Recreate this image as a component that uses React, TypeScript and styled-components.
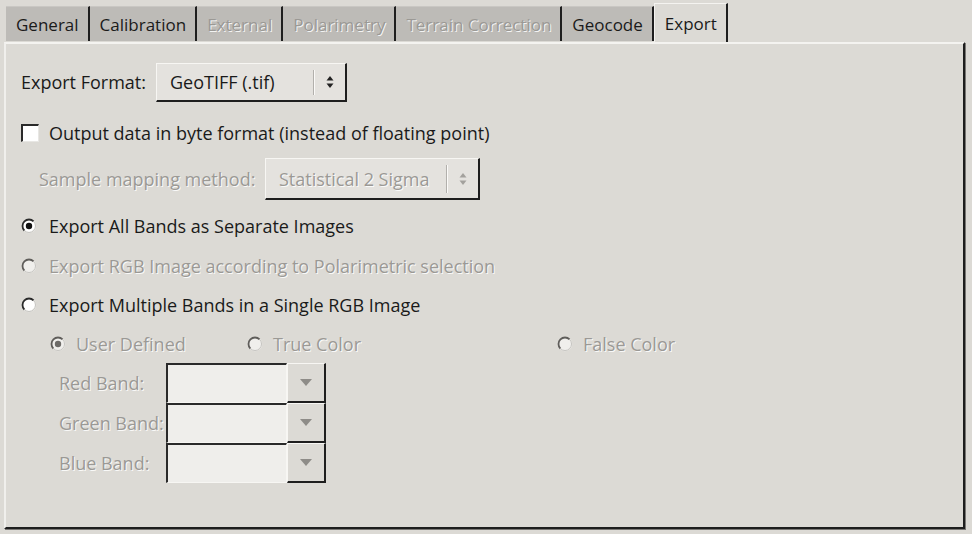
import React from "react";
import styled, { createGlobalStyle, css } from "styled-components";

const Global = createGlobalStyle`
  html, body { margin: 0; padding: 0; background: #dcdad5; }
  body { font-family: "Open Sans", "Noto Sans", "DejaVu Sans", sans-serif; }
  * { box-sizing: border-box; }
`;

const Window = styled.div`
  width: 972px;
  height: 534px;
  background: #dcdad5;
  display: flex;
  flex-direction: column;
  font-size: 18px;
  color: #1a1a1a;
  overflow: hidden;
`;

const TabBar = styled.div`
  display: flex;
  align-items: flex-end;
  height: 42px;
  padding-left: 6px;
  padding-top: 3px;
  font-size: 17px;
`;

const Tab = styled.div<{ $active?: boolean; $disabled?: boolean }>`
  height: ${(p) => (p.$active ? "39px" : "35px")};
  display: flex;
  align-items: center;
  padding: 0 9px 0 10px;
  background: ${(p) => (p.$active ? "#dcdad5" : "#bdbbb7")};
  border-right: 2px solid #1e1e1e;
  border-top: 1px solid ${(p) => (p.$active ? "#f4f3f0" : "#c9c7c3")};
  border-left: ${(p) => (p.$active ? "1px solid #f4f3f0" : "0")};
  color: ${(p) => (p.$disabled ? "#9b9995" : "#1a1a1a")};
  text-shadow: ${(p) => (p.$disabled ? "1px 1px 0 rgba(255,255,255,0.85)" : "none")};
  white-space: nowrap;
  ${(p) => !p.$active && css`margin-bottom: 1px;`}
`;

const Panel = styled.div`
  flex: 1;
  margin: 0 7px 5px 4px;
  border-top: 2px solid #f4f3f0;
  border-left: 2px solid #f0efec;
  border-right: 2px solid #1e1e1e;
  border-bottom: 2px solid #1e1e1e;
  box-shadow: 1px 1px 0 #7a7875;
  display: flex;
  flex-direction: column;
  padding: 18px 0 0 15px;
`;

const Row = styled.div<{ $h: number; $mt?: number; $indent?: number; $gap?: number }>`
  height: ${(p) => p.$h}px;
  margin-top: ${(p) => p.$mt ?? 0}px;
  padding-left: ${(p) => p.$indent ?? 0}px;
  display: flex;
  align-items: center;
  gap: ${(p) => p.$gap ?? 0}px;
`;

const Label = styled.span<{ $disabled?: boolean; $w?: number }>`
  color: ${(p) => (p.$disabled ? "#9b9995" : "#1a1a1a")};
  text-shadow: ${(p) => (p.$disabled ? "1px 1px 0 rgba(255,255,255,0.85)" : "none")};
  white-space: nowrap;
  ${(p) => p.$w && css`width: ${p.$w}px;`}
`;

const Combo = styled.div<{ $w: number; $h: number; $disabled?: boolean }>`
  width: ${(p) => p.$w}px;
  height: ${(p) => p.$h}px;
  display: flex;
  align-items: center;
  background: #e4e2de;
  border-top: 1px solid #f7f6f3;
  border-left: 1px solid #f7f6f3;
  border-right: 2px solid #1e1e1e;
  border-bottom: 2px solid #1e1e1e;
  padding-left: 13px;
  color: ${(p) => (p.$disabled ? "#9b9995" : "#1a1a1a")};
  text-shadow: ${(p) => (p.$disabled ? "1px 1px 0 rgba(255,255,255,0.85)" : "none")};
`;

const ComboText = styled.span`
  flex: 1;
  white-space: nowrap;
`;

const Groove = styled.div`
  width: 2px;
  align-self: stretch;
  margin: 6px 0 5px;
  border-left: 1px solid #b2b0ac;
  border-right: 1px solid #fbfaf8;
`;

const SpinBox = styled.div`
  width: 30px;
  display: flex;
  align-items: center;
  justify-content: center;
`;

const CheckBox = styled.div`
  width: 18px;
  height: 18px;
  background: #ffffff;
  border-top: 2px solid #2a2a2a;
  border-left: 2px solid #2a2a2a;
  border-right: 1px solid #e8e7e4;
  border-bottom: 1px solid #e8e7e4;
`;

const BandField = styled.div`
  width: 121px;
  height: 40px;
  background: #efeeeb;
  border-top: 2px solid #2a2a2a;
  border-left: 2px solid #2a2a2a;
  border-right: 1px solid #f7f6f3;
  border-bottom: 1px solid #f7f6f3;
`;

const BandButton = styled.div`
  width: 39px;
  height: 40px;
  background: #dcdad5;
  border-top: 1px solid #f7f6f3;
  border-left: 1px solid #f7f6f3;
  border-right: 2px solid #1e1e1e;
  border-bottom: 2px solid #1e1e1e;
  display: flex;
  align-items: center;
  justify-content: center;
`;

const BandRow = styled.div`
  display: flex;
  align-items: center;
  height: 40px;
  padding-left: 38px;
`;

const SubRadios = styled.div`
  display: grid;
  grid-template-columns: 197px 310px auto;
  align-items: center;
  height: 38px;
  padding-left: 29px;
`;

const RadioItem = styled.div`
  display: flex;
  align-items: center;
  gap: 10px;
`;

function Spinner({ color }: { color: string }) {
  return (
    <svg width="10" height="16" viewBox="0 0 10 16">
      <polygon points="1.5,6.5 8.5,6.5 5,2" fill={color} />
      <polygon points="1.5,9.5 8.5,9.5 5,14" fill={color} />
    </svg>
  );
}

function DownArrow() {
  return (
    <svg width="12" height="7" viewBox="0 0 12 7">
      <polygon points="0,0 12,0 6,7" fill="#8e8c88" />
    </svg>
  );
}

function Radio({ checked, disabled }: { checked?: boolean; disabled?: boolean }) {
  const dark = disabled ? "#5f5d5a" : "#2a2a2a";
  return (
    <svg width="16" height="16" viewBox="0 0 16 16">
      <circle cx="8" cy="8" r="6.5" fill={disabled ? "#f0efec" : "#ffffff"} stroke="#f4f3f0" strokeWidth="1.4" />
      <path d="M 12.6 3.4 A 6.5 6.5 0 0 0 3.4 12.6" fill="none" stroke={dark} strokeWidth="1.8" />
      <path d="M 12.6 3.4 A 6.5 6.5 0 0 1 3.4 12.6" fill="none" stroke="#b8b6b2" strokeWidth="0.8" />
      {checked && <circle cx="8" cy="8" r="3.2" fill={disabled ? "#6d6b68" : "#111"} />}
    </svg>
  );
}

const tabs: { name: string; disabled?: boolean; active?: boolean }[] = [
  { name: "General" },
  { name: "Calibration" },
  { name: "External", disabled: true },
  { name: "Polarimetry", disabled: true },
  { name: "Terrain Correction", disabled: true },
  { name: "Geocode" },
  { name: "Export", active: true },
];

export default function App() {
  return (
    <>
      <Global />
      <Window>
        <TabBar>
          {tabs.map((t) => (
            <Tab key={t.name} $active={t.active} $disabled={t.disabled}>
              {t.name}
            </Tab>
          ))}
        </TabBar>
        <Panel>
          <Row $h={40}>
            <Label $w={135}>Export Format:</Label>
            <Combo $w={191} $h={39}>
              <ComboText>GeoTIFF (.tif)</ComboText>
              <Groove />
              <SpinBox>
                <Spinner color="#222" />
              </SpinBox>
            </Combo>
          </Row>
          <Row $h={40} $mt={11} $gap={10}>
            <CheckBox />
            <Label>Output data in byte format (instead of floating point)</Label>
          </Row>
          <Row $h={42} $mt={5} $indent={18}>
            <Label $disabled $w={226}>Sample mapping method:</Label>
            <Combo $w={215} $h={42} $disabled>
              <ComboText>Statistical 2 Sigma</ComboText>
              <Groove />
              <SpinBox>
                <Spinner color="#a3a19d" />
              </SpinBox>
            </Combo>
          </Row>
          <Row $h={40} $mt={6} $gap={12}>
            <Radio checked />
            <Label>Export All Bands as Separate Images</Label>
          </Row>
          <Row $h={39} $gap={12}>
            <Radio disabled />
            <Label $disabled>Export RGB Image according to Polarimetric selection</Label>
          </Row>
          <Row $h={40} $gap={12}>
            <Radio />
            <Label>Export Multiple Bands in a Single RGB Image</Label>
          </Row>
          <SubRadios>
            <RadioItem>
              <Radio checked disabled />
              <Label $disabled>User Defined</Label>
            </RadioItem>
            <RadioItem>
              <Radio disabled />
              <Label $disabled>True Color</Label>
            </RadioItem>
            <RadioItem>
              <Radio disabled />
              <Label $disabled>False Color</Label>
            </RadioItem>
          </SubRadios>
          <BandRow>
            <Label $disabled $w={107}>Red Band:</Label>
            <BandField />
            <BandButton>
              <DownArrow />
            </BandButton>
          </BandRow>
          <BandRow>
            <Label $disabled $w={107}>Green Band:</Label>
            <BandField />
            <BandButton>
              <DownArrow />
            </BandButton>
          </BandRow>
          <BandRow>
            <Label $disabled $w={107}>Blue Band:</Label>
            <BandField />
            <BandButton>
              <DownArrow />
            </BandButton>
          </BandRow>
        </Panel>
      </Window>
    </>
  );
}
